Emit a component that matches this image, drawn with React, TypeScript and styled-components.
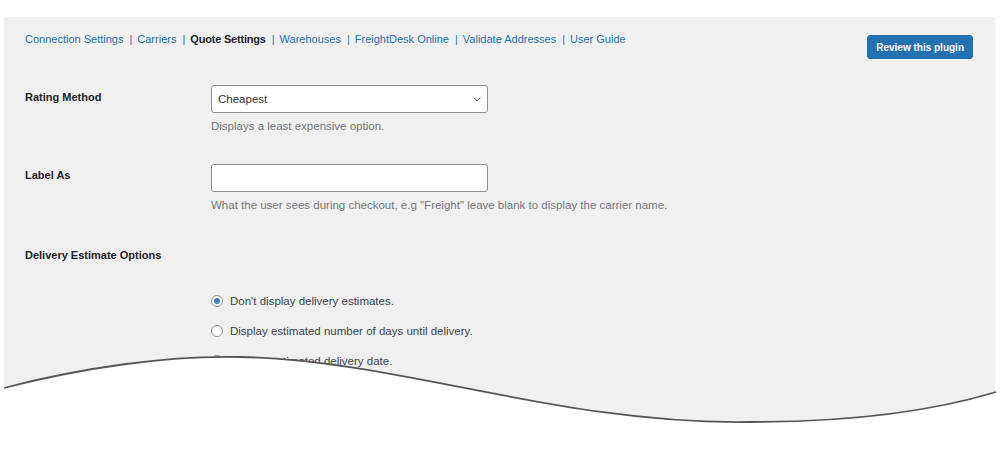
import React from "react";
import styled, { createGlobalStyle } from "styled-components";

const GlobalStyle = createGlobalStyle`
  html, body { margin: 0; padding: 0; background: #ffffff; }
  body {
    width: 1000px;
    height: 454px;
    overflow: hidden;
    font-family: "Liberation Sans", Arial, sans-serif;
    color: #1d2327;
  }
`;

const Stage = styled.div`
  position: relative;
  width: 1000px;
  height: 454px;
  padding-top: 17px;
  box-sizing: border-box;
`;

const Panel = styled.div`
  margin: 0 5px 0 4px;
  height: 437px;
  background: #f0f0f1;
  overflow: hidden;
`;

const Header = styled.div`
  display: flex;
  justify-content: space-between;
  align-items: flex-start;
  padding: 14px 22px 0 21px;
`;

const Nav = styled.nav`
  display: flex;
  align-items: center;
  font-size: 11px;
  line-height: 16px;
`;

const NavLink = styled.a<{ $current?: boolean }>`
  color: ${(p) => (p.$current ? "#1d2327" : "#2271b1")};
  font-weight: ${(p) => (p.$current ? 700 : 400)};
  letter-spacing: ${(p) => (p.$current ? "-0.2px" : "0")};
  text-decoration: none;
`;

const Sep = styled.span`
  color: #2271b1;
  margin: 0 5px 0 6px;
`;

const ReviewButton = styled.button`
  margin-top: 4px;
  height: 24px;
  padding: 0 8px;
  border: 1px solid #2271b1;
  border-radius: 3px;
  background: #2271b1;
  color: #ffffff;
  font-family: inherit;
  font-size: 10px;
  font-weight: 700;
  cursor: pointer;
`;

const Form = styled.div`
  margin-top: 26px;
  padding-left: 21px;
`;

const Row = styled.div<{ $gap?: number }>`
  display: grid;
  grid-template-columns: 186px 277px;
  margin-top: ${(p) => p.$gap ?? 0}px;
`;

const Label = styled.div<{ $top?: number }>`
  font-size: 11px;
  line-height: 16px;
  font-weight: 700;
  padding-top: ${(p) => p.$top ?? 4}px;
`;

const Field = styled.div`
  display: flex;
  flex-direction: column;
`;

const SelectBox = styled.div`
  position: relative;
  height: 28px;
  box-sizing: border-box;
  border: 1px solid #8c8f94;
  border-radius: 3px;
  background: #ffffff;
  display: flex;
  align-items: center;
  padding: 0 24px 0 6px;
  font-size: 11.5px;
  color: #2c3338;
`;

const Chevron = styled.svg`
  position: absolute;
  right: 6px;
  top: 11px;
`;

const TextInput = styled.input`
  height: 28px;
  box-sizing: border-box;
  border: 1px solid #8c8f94;
  border-radius: 3px;
  background: #ffffff;
  padding: 0 7px;
  font-family: inherit;
  font-size: 11px;
  outline: none;
`;

const Description = styled.p`
  margin: 5px 0 0;
  font-size: 11.5px;
  line-height: 16px;
  color: #72777c;
  white-space: nowrap;
`;

const RadioList = styled.div`
  display: flex;
  flex-direction: column;
  gap: 14px;
  margin: 30px 0 0 186px;
`;

const RadioRow = styled.label`
  display: flex;
  align-items: center;
  gap: 7px;
  font-size: 11.5px;
  line-height: 16px;
  color: #3c434a;
`;

const RadioDot = styled.span<{ $checked?: boolean }>`
  width: 12px;
  height: 12px;
  box-sizing: border-box;
  border: 1px solid #8c8f94;
  border-radius: 50%;
  background: #ffffff;
  display: flex;
  align-items: center;
  justify-content: center;
  flex: none;
  &::after {
    content: "";
    width: 6px;
    height: 6px;
    border-radius: 50%;
    background: ${(p) => (p.$checked ? "#3582c4" : "transparent")};
  }
`;

const WaveLayer = styled.svg`
  position: absolute;
  left: 0;
  top: 0;
  pointer-events: none;
`;

const links = [
  "Connection Settings",
  "Carriers",
  "Quote Settings",
  "Warehouses",
  "FreightDesk Online",
  "Validate Addresses",
  "User Guide",
];

const radios = [
  "Don't display delivery estimates.",
  "Display estimated number of days until delivery.",
  "Display estimated delivery date.",
];

const wave =
  "M4 388 C80 368 170 355 240 357 C400 360 560 425 750 422 C850 422 930 412 996 392";

export default function App() {
  return (
    <>
      <GlobalStyle />
      <Stage>
        <Panel>
          <Header>
            <Nav>
              {links.map((l, i) => (
                <React.Fragment key={l}>
                  {i > 0 && <Sep>|</Sep>}
                  <NavLink href="#" $current={l === "Quote Settings"}>
                    {l}
                  </NavLink>
                </React.Fragment>
              ))}
            </Nav>
            <ReviewButton>Review this plugin</ReviewButton>
          </Header>
          <Form>
            <Row>
              <Label>Rating Method</Label>
              <Field>
                <SelectBox>
                  Cheapest
                  <Chevron width="8" height="5" viewBox="0 0 8 5">
                    <path d="M0.5 0.5l3.5 3.5L7.5 0.5" fill="none" stroke="#50575e" strokeWidth="1" />
                  </Chevron>
                </SelectBox>
                <Description>Displays a least expensive option.</Description>
              </Field>
            </Row>
            <Row $gap={30}>
              <Label $top={3}>Label As</Label>
              <Field>
                <TextInput type="text" />
                <Description>
                  What the user sees during checkout, e.g "Freight" leave blank to display the carrier name.
                </Description>
              </Field>
            </Row>
            <Row $gap={34}>
              <Label $top={0}>Delivery Estimate Options</Label>
            </Row>
            <RadioList>
              {radios.map((r, i) => (
                <RadioRow key={r}>
                  <RadioDot $checked={i === 0} />
                  {r}
                </RadioRow>
              ))}
            </RadioList>
          </Form>
        </Panel>
        <WaveLayer width="1000" height="454" viewBox="0 0 1000 454">
          <path d={`${wave} L1000 392 L1000 454 L0 454 L0 388 Z`} fill="#ffffff" />
          <path d={wave} fill="none" stroke="#555555" strokeWidth="1.8" />
        </WaveLayer>
      </Stage>
    </>
  );
}
